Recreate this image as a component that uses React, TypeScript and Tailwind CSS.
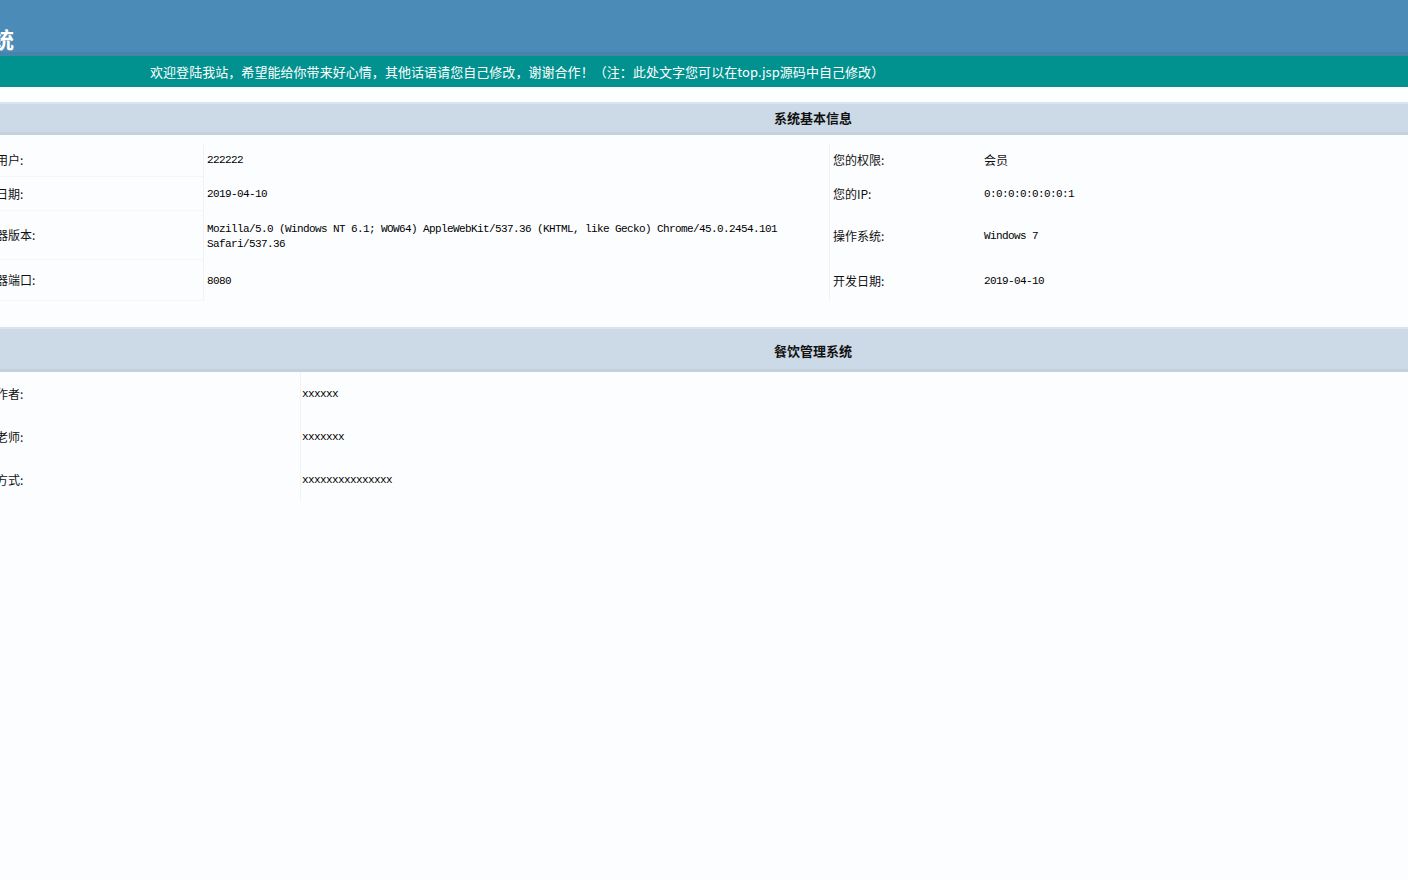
import React from "react";

const cjk = { fontFamily: '"Noto Sans CJK SC", "Noto Sans", sans-serif' };
const mono = { fontFamily: '"Liberation Mono", "Noto Sans CJK SC", monospace' };

function Mono({ children }: { children: React.ReactNode }) {
  return (
    <span className="text-[11px] tracking-[-0.6px] leading-[14px] text-black" style={mono}>
      {children}
    </span>
  );
}

function Label({ children }: { children: React.ReactNode }) {
  return (
    <span className="text-[12px] leading-[14px] text-[#111]" style={cjk}>
      {children}
    </span>
  );
}

function SectionHeader({ title, tall }: { title: string; tall?: boolean }) {
  return (
    <div className="flex flex-col">
      <div className="h-[2px] bg-[#dbe4ee]" />
      <div
        className={`flex items-center bg-[#ccd9e6] pl-[774px] ${tall ? "h-[40px] pt-[3px]" : "h-[28px]"}`}
      >
        <span className="text-[13px] font-bold text-[#111]" style={cjk}>
          {title}
        </span>
      </div>
      <div className="h-[3px] bg-[#c3d1de]" />
    </div>
  );
}

type Row = { h: string; l1: string; v1: React.ReactNode; l2: string; v2: React.ReactNode };

export default function App() {
  const rows: Row[] = [
    { h: "h-[34px]", l1: "当前用户:", v1: <Mono>222222</Mono>, l2: "您的权限:", v2: <Label>会员</Label> },
    { h: "h-[34px]", l1: "当前日期:", v1: <Mono>2019-04-10</Mono>, l2: "您的IP:", v2: <Mono>0:0:0:0:0:0:0:1</Mono> },
    {
      h: "h-[49px]",
      l1: "浏览器版本:",
      v1: (
        <div className="w-[600px] text-[11px] leading-[14px]">
          <Mono>
            Mozilla/5.0 (Windows NT 6.1; WOW64) AppleWebKit/537.36 (KHTML, like Gecko) Chrome/45.0.2454.101 Safari/537.36
          </Mono>
        </div>
      ),
      l2: "操作系统:",
      v2: <Mono>Windows 7</Mono>,
    },
    { h: "h-[41px]", l1: "服务器端口:", v1: <Mono>8080</Mono>, l2: "开发日期:", v2: <Mono>2019-04-10</Mono> },
  ];

  const rows2 = [
    { l: "系统作者:", v: "xxxxxx" },
    { l: "指导老师:", v: "xxxxxxx" },
    { l: "联系方式:", v: "xxxxxxxxxxxxxxx" },
  ];

  return (
    <div className="w-[1408px] h-[880px] overflow-hidden bg-[#fcfdff]">
      {/* top banner */}
      <div className="flex h-[52px] items-end bg-[#4a8cb7]">
        <div className="ml-[-118px] pb-[1px] text-[22px] font-bold leading-[26px] text-white" style={cjk}>
          餐饮管理系统
        </div>
      </div>
      <div className="h-[4px] bg-[#4684ac]" />
      <div className="flex h-[31px] items-center bg-[#01928f] pl-[150px]">
        <span className="text-[13px] tracking-[0.05px] text-white" style={cjk}>
          欢迎登陆我站，希望能给你带来好心情，其他话语请您自己修改，谢谢合作！（注：此处文字您可以在top.jsp源码中自己修改）
        </span>
      </div>
      <div className="h-[15px] bg-[#fdfeff]" />

      <SectionHeader title="系统基本信息" />
      <div className="h-[8px]" />
      <div className="flex flex-col ml-[-28px]">
        {rows.map((r, i) => (
          <div key={i} className={`flex items-center ${r.h}`}>
            <div className="flex h-full w-[231px] items-center border-b border-[#f5f6f7]">
              <Label>{r.l1}</Label>
            </div>
            <div className="flex h-full w-[626px] items-center border-l border-[#f1f2f4] pl-[3px]">
              {r.v1}
            </div>
            <div className="flex h-full w-[155px] items-center border-l border-[#f1f2f4] pl-[3px]">
              <Label>{r.l2}</Label>
            </div>
            <div className="flex h-full flex-1 items-center">{r.v2}</div>
          </div>
        ))}
      </div>
      <div className="h-[26px]" />

      <SectionHeader title="餐饮管理系统" tall />
      <div className="flex flex-col ml-[-28px]">
        {rows2.map((r, i) => (
          <div key={i} className="flex h-[43px] items-center">
            <div className="flex h-full w-[328px] items-center">
              <Label>{r.l}</Label>
            </div>
            <div className="flex h-full flex-1 items-center border-l border-[#f1f2f4] pl-[1px]">
              <Mono>{r.v}</Mono>
            </div>
          </div>
        ))}
      </div>
    </div>
  );
}
